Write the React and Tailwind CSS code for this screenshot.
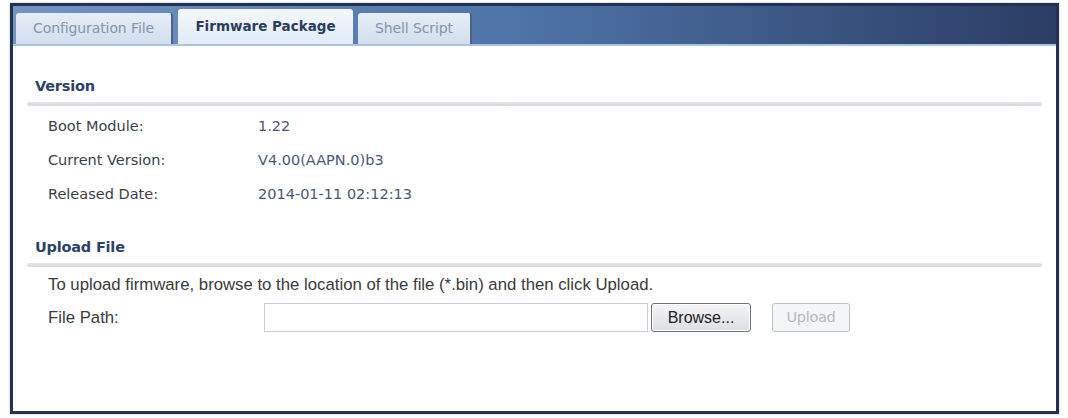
import React from 'react';

const tabs = [
  { label: 'Configuration File', active: false, w: 'w-[157px]' },
  { label: 'Firmware Package', active: true, w: 'w-[175px]' },
  { label: 'Shell Script', active: false, w: 'w-[114px]' },
];

const versionRows = [
  ['Boot Module:', '1.22'],
  ['Current Version:', 'V4.00(AAPN.0)b3'],
  ['Released Date:', '2014-01-11 02:12:13'],
];

const SectionTitle = ({ children }) => (
  <div className="mx-[14px]">
    <div className="px-[8px] h-[20px] leading-[20px] text-[14.5px] font-bold text-[#2d4268] [font-family:'DejaVu_Sans',sans-serif] tracking-[-0.2px]">
      {children}
    </div>
    <div className="mt-[6px] h-[4px] rounded-full bg-gradient-to-b from-[#e4e6ea] to-[#d6d9de]" />
  </div>
);

export default function App() {
  return (
    <div className="w-[1068px] h-[418px] bg-white pt-[3px] pl-[10px]">
      <div className="w-[1049px] h-[411px] flex flex-col border-[3px] border-[#243252] bg-white shadow-[0_0_2px_rgba(0,0,0,0.3)]">
        {/* tab strip */}
        <div className="h-[40px] flex items-end gap-[5px] pl-[3px] bg-gradient-to-r from-[#7295c4] via-[#4d72a6] to-[#2b3d64] border-b-[2px] border-[#a9c3e6]">
          {tabs.map((t) => (
            <div
              key={t.label}
              className={`${t.w} flex items-center justify-center rounded-t-[3px] [font-family:'DejaVu_Sans',sans-serif] ${
                t.active
                  ? 'h-[35px] text-[13.5px] bg-gradient-to-b from-[#f4f8fc] to-[#e2ebf6] font-bold text-[#2a3d5f]'
                  : 'h-[31px] text-[14px] tracking-[-0.1px] bg-gradient-to-b from-[#e6edf6] to-[#d3dfee] text-[#8494ac] border-r-[2px] border-[#4a6387]'
              }`}
            >
              {t.label}
            </div>
          ))}
        </div>

        {/* content */}
        <div className="flex-1 flex flex-col pt-[30px] text-[14.5px] text-[#3a3f49] [font-family:'DejaVu_Sans',sans-serif]">
          <SectionTitle>Version</SectionTitle>

          <div className="mt-[11px] flex flex-col gap-[14px] pl-[35px]">
            {versionRows.map(([k, v]) => (
              <div key={k} className="flex h-[20px] items-center">
                <div className="w-[210px]">{k}</div>
                <div className="text-[#4b5774]">{v}</div>
              </div>
            ))}
          </div>

          <div className="mt-[32px]">
            <SectionTitle>Upload File</SectionTitle>
          </div>

          <div className="mt-[8px] pl-[35px] h-[20px] leading-[20px] [font-family:'Liberation_Sans',sans-serif] text-[16.75px] text-[#3a3a3a]">
            To upload firmware, browse to the location of the file (*.bin) and then click Upload.
          </div>

          <div className="mt-[8px] pl-[35px] flex items-center">
            <div className="w-[216px] [font-family:'Liberation_Sans',sans-serif] text-[16.75px] text-[#3a3a3a]">File Path:</div>
            <div className="w-[384px] h-[29px] border border-[#c9cdd3] bg-white" />
            <button className="ml-[3px] w-[100px] h-[29px] rounded-[3px] border border-[#6d7178] bg-gradient-to-b from-[#f4f5f7] to-[#dcdfe4] text-[16px] text-[#222] [font-family:'Liberation_Sans',sans-serif] shadow-[inset_0_0_0_1px_#ffffff]">
              Browse...
            </button>
            <button className="ml-[21px] w-[78px] h-[29px] rounded-[3px] border border-[#bfc3c8] bg-[#f4f5f6] text-[14.5px] text-[#b4b9c0] [font-family:'DejaVu_Sans',sans-serif] tracking-[-0.3px]">
              Upload
            </button>
          </div>
        </div>
      </div>
    </div>
  );
}
